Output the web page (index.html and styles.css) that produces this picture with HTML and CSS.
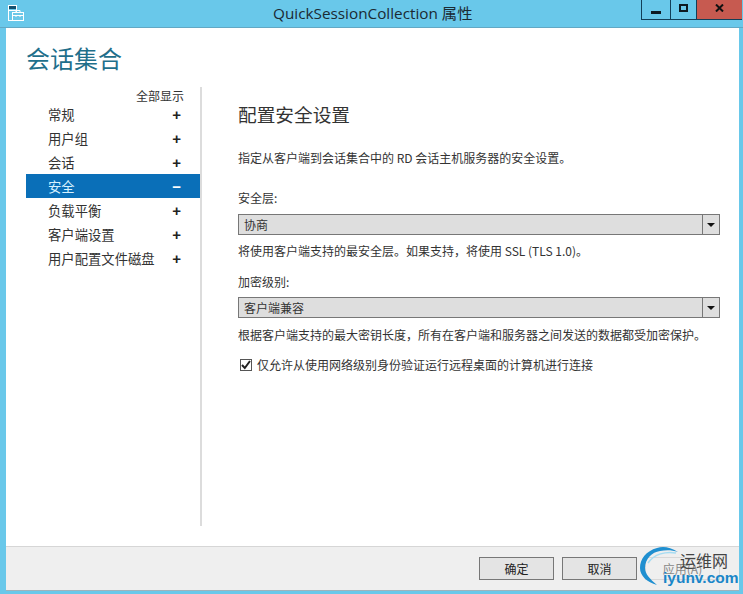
FILE: index.html
```html
<!DOCTYPE html>
<html lang="zh">
<head>
<meta charset="utf-8">
<title>QuickSessionCollection 属性</title>
<link rel="stylesheet" href="styles.css">
</head>
<body>
<div class="window">
  <header class="titlebar">
    <svg class="app-icon" width="17" height="17" viewBox="0 0 17 17">
      <rect x="0.5" y="0.5" width="8" height="15" fill="none" stroke="#fff"/>
      <rect x="1" y="1" width="7" height="3" fill="#14506e"/>
      <rect x="1" y="5" width="7" height="1" fill="#fff"/>
      <rect x="4.5" y="7.5" width="11" height="8" fill="#6cc8e8" stroke="#fff"/>
      <path d="M8 7.5V5.5H12V7.5M4.5 10.5H15.5M8 10V12M12 10V12" fill="none" stroke="#fff"/>
    </svg>
    <div class="title">QuickSessionCollection 属性</div>
    <div class="controls">
      <div class="ctl ctl-min"><span class="glyph-min"></span></div>
      <div class="ctl ctl-max"><span class="glyph-max"></span></div>
      <div class="ctl ctl-close">
        <svg width="9" height="8" viewBox="0 0 9 8"><path d="M1 0.5L8 7.5M8 0.5L1 7.5" stroke="#111" stroke-width="2"/></svg>
      </div>
    </div>
  </header>
  <div class="frame">
    <div class="content">
      <h1 class="page-title">会话集合</h1>
      <div class="columns">
        <nav class="sidebar">
          <div class="show-all">全部显示</div>
          <div class="nav-item"><span>常规</span><span class="sign">+</span></div>
          <div class="nav-item"><span>用户组</span><span class="sign">+</span></div>
          <div class="nav-item"><span>会话</span><span class="sign">+</span></div>
          <div class="nav-item active"><span>安全</span><span class="sign">−</span></div>
          <div class="nav-item"><span>负载平衡</span><span class="sign">+</span></div>
          <div class="nav-item"><span>客户端设置</span><span class="sign">+</span></div>
          <div class="nav-item"><span>用户配置文件磁盘</span><span class="sign">+</span></div>
        </nav>
        <main class="panel">
          <h2 class="panel-title">配置安全设置</h2>
          <p class="desc">指定从客户端到会话集合中的 RD 会话主机服务器的安全设置。</p>
          <label class="field-label">安全层:</label>
          <div class="select"><span class="select-value">协商</span><span class="select-arrow"><i class="tri"></i></span></div>
          <p class="hint">将使用客户端支持的最安全层。如果支持，将使用 SSL (TLS 1.0)。</p>
          <label class="field-label second">加密级别:</label>
          <div class="select second"><span class="select-value">客户端兼容</span><span class="select-arrow"><i class="tri"></i></span></div>
          <p class="hint second">根据客户端支持的最大密钥长度，所有在客户端和服务器之间发送的数据都受加密保护。</p>
          <div class="check-row">
            <span class="checkbox">
              <svg width="10" height="10" viewBox="0 0 10 10"><path d="M1 5L3.8 8L9 1" fill="none" stroke="#222" stroke-width="2"/></svg>
            </span>
            <span>仅允许从使用网络级别身份验证运行远程桌面的计算机进行连接</span>
          </div>
        </main>
      </div>
      <footer class="footer">
        <button class="btn">确定</button>
        <button class="btn">取消</button>
        <button class="btn disabled">应用(A)</button>
      </footer>
    </div>
  </div>
  <div class="watermark">
    <svg class="wm-arc" width="42" height="42" viewBox="0 0 42 42">
      <path d="M38 6C30 1 23 0 17 2C6 5 0 13 0 22C0 30 7 36 17 39C10 33 5 28 5 22C5 13 12 6 20 5C26 4 32 4 38 6Z" fill="#1f8fd0"/>
      <path d="M36 7C26 5 14 8 8 17" fill="none" stroke="#a6dcf2" stroke-width="1.5"/>
    </svg>
    <span class="wm-cn">运维网</span>
    <span class="wm-en">iyunv.com</span>
  </div>
</div>
</body>
</html>
```
FILE: styles.css
```css
* { box-sizing: border-box; }
html, body { margin: 0; padding: 0; }
body {
  width: 743px;
  height: 594px;
  overflow: hidden;
  font-family: "Noto Sans CJK SC", "Liberation Sans", sans-serif;
  font-size: 12px;
  color: #222;
  background: #fff;
}
.window {
  position: relative;
  width: 743px;
  height: 594px;
  display: flex;
  flex-direction: column;
  background: #69c8ea;
}
.titlebar {
  height: 28px;
  flex: none;
  display: flex;
  align-items: flex-start;
  position: relative;
  border-bottom: 1px solid #62a8c4;
}
.app-icon { margin: 5px 0 0 8px; }
.title {
  position: absolute;
  left: 273px;
  top: 3px;
  font-family: "Open Sans", "Noto Sans CJK SC", sans-serif;
  font-size: 15.3px;
  line-height: 20px;
  color: #1b2a33;
  white-space: nowrap;
}
.controls {
  margin-left: auto;
  margin-right: 1px;
  display: flex;
  height: 20px;
  border-bottom: 1px solid #123f58;
}
.ctl {
  display: flex;
  align-items: center;
  justify-content: center;
  height: 19px;
  border-left: 1px solid #123f58;
}
.ctl-min { width: 29px; }
.ctl-max { width: 26px; }
.ctl-close { width: 46px; background: #c75a50; }
.glyph-min { width: 10px; height: 3px; background: #0d1a22; margin-top: 5px; }
.glyph-max { width: 9px; height: 8px; border: 2px solid #0d1a22; margin-top: -3px; }
.ctl-close svg { margin-top: -3px; }
.frame {
  flex: 1;
  display: flex;
  padding: 0 4px 3px 6px;
  min-height: 0;
}
.content {
  flex: 1;
  background: #fff;
  display: flex;
  flex-direction: column;
  border-bottom: 1px solid #9fb3bb;
}
.page-title {
  margin: 0;
  padding: 13px 0 0 20px;
  height: 58px;
  font-size: 24px;
  line-height: 33px;
  font-weight: 400;
  color: #1f6f8b;
}
.columns {
  display: flex;
  flex: 1;
  min-height: 0;
  padding-left: 20px;
  padding-bottom: 20px;
  margin-top: 1px;
}
.sidebar {
  width: 176px;
  flex: none;
  border-right: 2px solid #dcdcdc;
}
.show-all {
  height: 15px;
  line-height: 16px;
  margin-top: 0;
  padding-top: 1px;
  padding-left: 110px;
  color: #333;
}
.nav-item {
  height: 24px;
  display: flex;
  align-items: center;
  padding-left: 22px;
  padding-right: 19px;
  justify-content: space-between;
  font-size: 13.33px;
  color: #333;
}
.nav-item .sign {
  font-family: "Liberation Sans", sans-serif;
  font-weight: 700;
  font-size: 15px;
  color: #222;
}
.nav-item.active {
  background: #0a6fb8;
  color: #d8f2ff;
}
.nav-item.active .sign { color: #fff; }
.panel {
  flex: 1;
  padding: 14px 19px 0 36px;
  min-width: 0;
}
.panel-title {
  margin: 0;
  font-size: 18.67px;
  line-height: 26px;
  font-weight: 400;
  color: #333;
}
.desc {
  margin: 22px 0 0;
  line-height: 18px;
  color: #333;
}
.field-label {
  display: block;
  margin-top: 22px;
  line-height: 18px;
  color: #333;
}
.field-label.second { margin-top: 13px; }
.select {
  margin-top: 7px;
  height: 21px;
  background: #dedede;
  border: 1px solid #777;
  display: flex;
  justify-content: space-between;
}
.select.second { margin-top: 6px; }
.select-value { padding-left: 5px; line-height: 19px; color: #333; }
.select-arrow {
  width: 17px;
  border-left: 1px solid #777;
  display: flex;
  align-items: center;
  justify-content: center;
}
.tri {
  width: 0;
  height: 0;
  border-left: 4px solid transparent;
  border-right: 4px solid transparent;
  border-top: 4px solid #111;
}
.hint {
  margin: 7px 0 0;
  line-height: 18px;
  color: #333;
}
.hint.second { margin-top: 8px; }
.check-row {
  margin-top: 12px;
  display: flex;
  align-items: center;
  gap: 5px;
  line-height: 18px;
  color: #333;
}
.checkbox {
  width: 12px;
  height: 12px;
  margin-left: 2px;
  border: 1px solid #555;
  display: flex;
  align-items: center;
  justify-content: center;
  flex: none;
}
.footer {
  height: 44px;
  flex: none;
  background: #efefef;
  border-top: 1px solid #d6d6d6;
  display: flex;
  justify-content: flex-end;
  align-items: flex-start;
  gap: 8px;
  padding: 10px 19px 0 0;
}
.btn {
  width: 75px;
  height: 23px;
  padding: 0;
  background: #e4e4e4;
  border: 1px solid #777;
  font: inherit;
  color: #222;
}
.btn.disabled {
  background: #efefef;
  border-color: #d8d8d8;
  color: #888;
}
.watermark {
  position: absolute;
  left: 640px;
  top: 546px;
  width: 103px;
  height: 46px;
}
.wm-arc { position: absolute; left: 0; top: 0; }
.wm-cn {
  position: absolute;
  left: 40px;
  top: 4px;
  font-size: 16px;
  line-height: 20px;
  color: #444;
  white-space: nowrap;
}
.wm-en {
  position: absolute;
  left: 23px;
  top: 23px;
  font-family: "Liberation Sans", sans-serif;
  font-weight: 700;
  font-size: 15.5px;
  line-height: 18px;
  color: #1a86c8;
  white-space: nowrap;
}
```
